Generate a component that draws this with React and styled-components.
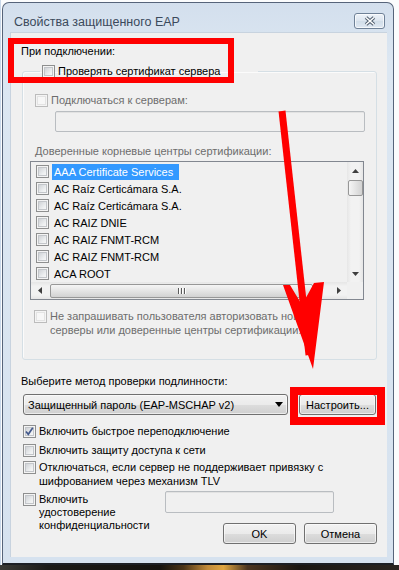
import React from 'react';
import styled, { createGlobalStyle, css } from 'styled-components';

const GlobalStyle = createGlobalStyle`
  html, body { margin: 0; padding: 0; background: #f7f9fc; }
  body {
    font-family: "Liberation Sans", Arial, sans-serif;
    font-size: 11px;
    color: #000;
  }
  * { box-sizing: border-box; }
`;

const Page = styled.div`
  position: relative;
  width: 399px;
  height: 570px;
  overflow: hidden;
  display: flex;
  flex-direction: column;
  padding: 2px 0 0 2px;
  background: linear-gradient(to right, #c9d8ea 0, #c9d8ea 1px, #fbfcfd 1px);
`;

const Window = styled.div`
  flex: none;
  width: 392px;
  height: 563px;
  display: flex;
  flex-direction: column;
  border: 1px solid #56647a;
  border-bottom: 2px solid #1c1f24;
  border-radius: 7px 7px 0 0;
  background: linear-gradient(to bottom, #d3dfed, #dce7f2 60px, #d6e2ef);
  padding: 0 6px 6px 7px;
`;

const Desktop = styled.div`
  flex: 1;
  margin-left: -2px;
  background: linear-gradient(to right, #3a3a36 0, #1b1a17 12%, #15130f 40%, #4a3418 46%, #c08a3a 52%, #e0a640 56%, #4b3520 62%, #1a1612 75%, #2a2520 100%);
`;

const TitleBar = styled.div`
  flex: none;
  height: 29px;
  display: flex;
  align-items: flex-start;
  padding: 10px 2px 0 4px;
`;

const Title = styled.div`
  margin-top: 2px;
  font-size: 12.5px;
  line-height: 15px;
  color: #3b4a5c;
`;

const CloseButton = styled.div`
  margin-left: auto;
  width: 31px;
  height: 16px;
  display: flex;
  align-items: center;
  justify-content: center;
  border: 1px solid #6f8197;
  border-radius: 3px;
  background: linear-gradient(to bottom, #eef3f9, #dce5ef 50%, #d1dde9 51%, #dfe8f2);
  box-shadow: inset 0 0 0 1px rgba(255, 255, 255, 0.7);
`;

const Client = styled.div`
  flex: none;
  height: 525px;
  display: flex;
  flex-direction: column;
  align-items: flex-start;
  background: #f0f0f0;
  padding: 0 10px 0 11px;
  box-shadow: inset 1px 1px 0 #c8d3df;
`;

const Label = styled.div`
  line-height: 15px;
  white-space: nowrap;
  color: ${(p) => (p.$disabled ? '#6d6d6d' : '#000')};
  margin-top: ${(p) => p.$top || 0}px;
  margin-left: ${(p) => p.$left || 0}px;
`;

const Group = styled.fieldset`
  margin: 5px 0 0 1px;
  padding: 0 0 22px 11px;
  width: 355px;
  border: 1px solid #d5dfe5;
  border-radius: 3px;
  box-shadow: inset 1px 1px 0 #fbfbfb;
  min-width: 0;
`;

const Legend = styled.legend`
  margin-left: 6px;
  padding: 0 2px;
  width: 218px;
`;

const CheckRow = styled.label`
  display: flex;
  align-items: flex-start;
  gap: ${(p) => p.$gap ?? 3}px;
  line-height: ${(p) => p.$lh || 15}px;
  margin-top: ${(p) => p.$top || 0}px;
  margin-left: ${(p) => p.$left || 0}px;
  color: ${(p) => (p.$disabled ? '#6d6d6d' : '#000')};
  white-space: nowrap;
`;

const Box = styled.span`
  flex: none;
  position: relative;
  width: 13px;
  height: 13px;
  margin-top: ${(p) => p.$mt ?? 1}px;
  border: 1px solid ${(p) => (p.$disabled ? '#bcbcbc' : '#8e8f8f')};
  background: #f4f4f4;
  &::after {
    content: '';
    position: absolute;
    inset: 1px;
    border: 1px solid ${(p) => (p.$disabled ? '#e3e3e3' : '#c3c6ca')};
    background: ${(p) =>
      p.$disabled ? '#f7f7f7' : 'linear-gradient(135deg, #d0d3d7, #eef0f1 70%, #f6f6f6)'};
  }
  svg {
    position: absolute;
    left: 0;
    top: 0;
    z-index: 1;
  }
`;

const TextField = styled.div`
  width: ${(p) => p.$w}px;
  height: ${(p) => p.$h || 21}px;
  margin-top: ${(p) => p.$top || 0}px;
  margin-left: ${(p) => p.$left || 0}px;
  border: 1px solid #b9bdc1;
  border-radius: 2px;
  background: #f0f0f0;
  box-shadow: inset 0 1px 0 #e2e2e2;
`;

const ListBox = styled.div`
  margin: 2px 0 0 -4px;
  width: 334px;
  height: 139px;
  border: 1px solid #828790;
  background: #f0f0f0;
  display: grid;
  grid-template-columns: 1fr 16px;
  grid-template-rows: 1fr 17px;
`;

const Rows = styled.div`
  padding: 1px 0 0 5px;
  overflow: hidden;
`;

const Row = styled.div`
  height: 17px;
  display: flex;
  align-items: center;
  gap: 3px;
`;

const ItemText = styled.span`
  line-height: 16px;
  padding: 0 6px 0 2px;
  white-space: nowrap;
  ${(p) =>
    p.$selected &&
    css`
      background: #3399ff;
      color: #fff;
    `}
`;

const VScroll = styled.div`
  display: flex;
  flex-direction: column;
  align-items: center;
  background: linear-gradient(to right, #e6e6e6, #f2f2f2 25%, #f2f2f2 75%, #e6e6e6);
`;

const HScroll = styled.div`
  display: flex;
  align-items: center;
  background: linear-gradient(to bottom, #e6e6e6, #f2f2f2 25%, #f2f2f2 75%, #e6e6e6);
`;

const ArrowCell = styled.div`
  flex: none;
  width: ${(p) => p.$w || 16}px;
  height: ${(p) => p.$h || 17}px;
  display: flex;
  align-items: center;
  justify-content: center;
`;

const VThumb = styled.div`
  margin-top: 1px;
  width: 15px;
  height: 16px;
  border: 1px solid #979797;
  border-radius: 2px;
  background: linear-gradient(to right, #f5f5f5, #e4e4e4 50%, #d2d2d2);
`;

const HThumb = styled.div`
  width: 263px;
  height: 14px;
  margin-left: 2px;
  display: flex;
  align-items: center;
  justify-content: center;
  gap: 1px;
  border: 1px solid #979797;
  border-radius: 2px;
  background: linear-gradient(to bottom, #f5f5f5, #e4e4e4 50%, #d2d2d2);
  i {
    width: 1px;
    height: 6px;
    background: #5b5b5b;
    box-shadow: 1px 0 0 #fff;
    margin-right: 1px;
  }
`;

const Corner = styled.div`
  background: #f0f0f0;
`;

const Spacer = styled.div`
  flex: 1;
`;

const MethodRow = styled.div`
  display: flex;
  align-items: center;
  gap: 11px;
  margin: 5px 0 0 2px;
`;

const Select = styled.div`
  width: 265px;
  height: 21px;
  display: flex;
  align-items: center;
  justify-content: space-between;
  padding: 0 4px 0 4px;
  border: 1px solid #707070;
  border-radius: 3px;
  background: linear-gradient(to bottom, #f2f2f2, #ebebeb 50%, #dddddd 51%, #cfcfcf);
  box-shadow: inset 0 0 0 1px rgba(255, 255, 255, 0.6);
`;

const Button = styled.div`
  width: ${(p) => p.$w || 73}px;
  height: 21px;
  display: flex;
  align-items: center;
  justify-content: center;
  border: 1px solid #707070;
  border-radius: 3px;
  background: linear-gradient(to bottom, #f2f2f2, #ebebeb 50%, #dddddd 51%, #cfcfcf);
  box-shadow: inset 0 0 0 1px rgba(255, 255, 255, 0.6);
  white-space: nowrap;
`;

const BottomRow = styled.div`
  align-self: stretch;
  display: flex;
  align-items: flex-start;
  margin-top: 3px;
`;

const RightColumn = styled.div`
  margin-left: auto;
  width: 212px;
  display: flex;
  flex-direction: column;
  align-items: flex-start;
`;

const ButtonBar = styled.div`
  align-self: stretch;
  display: flex;
  justify-content: flex-end;
  gap: 8px;
  margin-top: 10px;
`;

const RedBox = styled.div`
  position: absolute;
  border: ${(p) => p.$bw}px solid #ff0000;
  pointer-events: none;
`;

const Overlay = styled.svg`
  position: absolute;
  left: 0;
  top: 0;
  pointer-events: none;
`;

const Check = ({ disabled, checked, mt }) => (
  <Box $disabled={disabled} $mt={mt}>
    {checked && (
      <svg width="11" height="11" viewBox="0 0 11 11">
        <path d="M2 5.5 L4.3 8.3 L8.8 1.8" fill="none" stroke="#44598c" strokeWidth="1.7" />
      </svg>
    )}
  </Box>
);

const Tri = ({ dir }) => {
  const pts = {
    up: '0,4 3.5,0 7,4',
    down: '0,0 3.5,4 7,0',
    left: '4,0 0,3.5 4,7',
    right: '0,0 4,3.5 0,7',
  }[dir];
  const horiz = dir === 'left' || dir === 'right';
  return (
    <svg width={horiz ? 4 : 7} height={horiz ? 7 : 4} viewBox={horiz ? '0 0 4 7' : '0 0 7 4'}>
      <polygon points={pts} fill="#3f3f3f" />
    </svg>
  );
};

const certs = [
  'AAA Certificate Services',
  'AC Raíz Certicámara S.A.',
  'AC Raíz Certicámara S.A.',
  'AC RAIZ DNIE',
  'AC RAIZ FNMT-RCM',
  'AC RAIZ FNMT-RCM',
  'ACA ROOT',
];

export default function App() {
  return (
    <Page>
      <GlobalStyle />
      <Window>
        <TitleBar>
          <Title>Свойства защищенного EAP</Title>
          <CloseButton>
            <svg width="12" height="10" viewBox="0 0 12 10">
              <path d="M2 1.5 L10 8.5 M10 1.5 L2 8.5" stroke="#4f5d6e" strokeWidth="3.6" />
              <path d="M2 1.5 L10 8.5 M10 1.5 L2 8.5" stroke="#ffffff" strokeWidth="1.6" />
            </svg>
          </CloseButton>
        </TitleBar>
        <Client>
          <Label $top={12}>При подключении:</Label>
          <Group>
            <Legend>
              <CheckRow>
                <Check />
                Проверять сертификат сервера
              </CheckRow>
            </Legend>
            <CheckRow $disabled $top={14} $left={1}>
              <Check disabled />
              Подключаться к серверам:
            </CheckRow>
            <TextField $w={310} $top={3} $left={21} />
            <Label $disabled $top={12} $left={1}>
              Доверенные корневые центры сертификации:
            </Label>
            <ListBox>
              <Rows>
                {certs.map((c, i) => (
                  <Row key={i}>
                    <Check mt={0} />
                    <ItemText $selected={i === 0}>{c}</ItemText>
                  </Row>
                ))}
              </Rows>
              <VScroll>
                <ArrowCell>
                  <Tri dir="up" />
                </ArrowCell>
                <VThumb />
                <Spacer />
                <ArrowCell>
                  <Tri dir="down" />
                </ArrowCell>
              </VScroll>
              <HScroll>
                <ArrowCell $w={17}>
                  <Tri dir="left" />
                </ArrowCell>
                <HThumb>
                  <i />
                  <i />
                  <i />
                </HThumb>
                <Spacer />
                <ArrowCell $w={17}>
                  <Tri dir="right" />
                </ArrowCell>
              </HScroll>
              <Corner />
            </ListBox>
            <CheckRow $disabled $top={10} $left={0} $lh={13.5}>
              <Check disabled mt={0} />
              <span>
                Не запрашивать пользователя авторизовать новые
                <br />
                серверы или доверенные центры сертификации.
              </span>
            </CheckRow>
          </Group>
          <Label $top={14}>Выберите метод проверки подлинности:</Label>
          <MethodRow>
            <Select>
              <span>Защищенный пароль (EAP-MSCHAP v2)</span>
              <svg width="8" height="5" viewBox="0 0 8 5">
                <polygon points="0,0 8,0 4,5" fill="#000" />
              </svg>
            </Select>
            <Button $w={77}>Настроить...</Button>
          </MethodRow>
          <CheckRow $top={9} $left={2}>
            <Check checked />
            Включить быстрое переподключение
          </CheckRow>
          <CheckRow $top={4} $left={2}>
            <Check />
            Включить защиту доступа к сети
          </CheckRow>
          <CheckRow $top={3} $left={2} $lh={13.5}>
            <Check mt={0} />
            <span>
              Отключаться, если сервер не поддерживает привязку с
              <br />
              шифрованием через механизм TLV
            </span>
          </CheckRow>
          <BottomRow>
            <CheckRow $top={2} $left={2} $lh={13}>
              <Check mt={0} />
              <span>
                Включить
                <br />
                удостоверение
                <br />
                конфиденциальности
              </span>
            </CheckRow>
            <RightColumn>
              <TextField $w={169} $h={22} />
              <ButtonBar>
                <Button>OK</Button>
                <Button>Отмена</Button>
              </ButtonBar>
            </RightColumn>
          </BottomRow>
        </Client>
      </Window>
      <Desktop />
      <RedBox $bw={6} style={{ left: 8, top: 38, width: 226, height: 45 }} />
      <RedBox $bw={8} style={{ left: 290, top: 387, width: 95, height: 38 }} />
      <Overlay width="399" height="570" viewBox="0 0 399 570">
        <line x1="282" y1="111" x2="309" y2="355" stroke="#ff0000" strokeWidth="7" />
        <polygon points="283,285 290,285 302,305 314,283 324,282 313,369" fill="#ff0000" />
      </Overlay>
    </Page>
  );
}
